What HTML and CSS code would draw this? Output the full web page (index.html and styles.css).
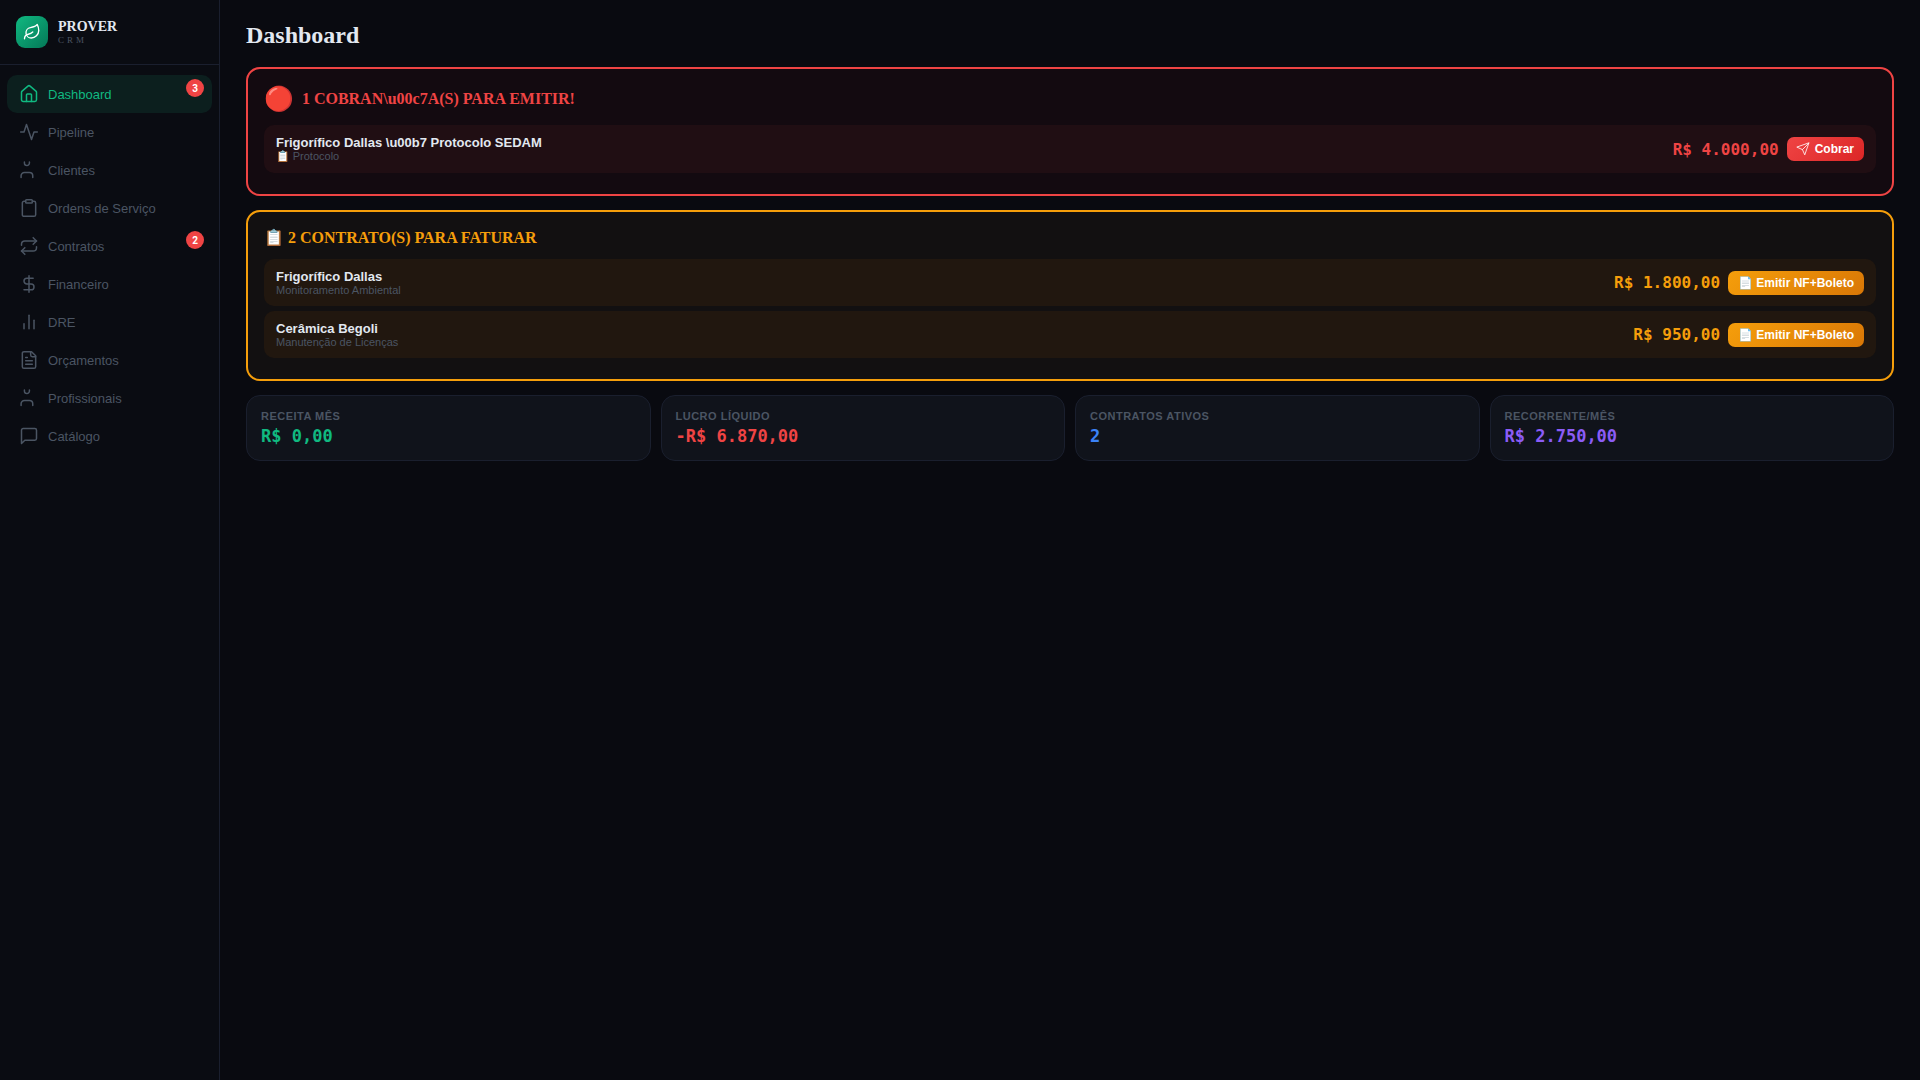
FILE: index.html
```html
<!DOCTYPE html>
<html lang="pt-BR">
<head>
<meta charset="utf-8">
<title>Prover CRM</title>
<link rel="stylesheet" href="styles.css">
</head>
<body>
<div class="app">
  <aside class="sidebar">
    <div class="brand">
      <div class="logo">
        <svg viewBox="0 0 24 24" class="logo-icon"><path d="M11 20A7 7 0 0 1 9.8 6.1C15.5 5 17 4.48 19 2c1 2 2 4.18 2 8 0 5.5-4.78 10-10 10Z"/><path d="M2 21c0-3 1.85-5.36 5.08-6C9.5 14.52 12 13 13 12"/></svg>
      </div>
      <div class="brand-text">
        <div class="brand-name">PROVER</div>
        <div class="brand-sub">CRM</div>
      </div>
    </div>
    <nav class="nav">
      <a class="nav-item active"><svg class="nav-icon" viewBox="0 0 24 24"><path d="M15 21v-8a1 1 0 0 0-1-1h-4a1 1 0 0 0-1 1v8"/><path d="M3 10a2 2 0 0 1 .71-1.53l7-6a2 2 0 0 1 2.58 0l7 6A2 2 0 0 1 21 10v9a2 2 0 0 1-2 2H5a2 2 0 0 1-2-2z"/></svg><span>Dashboard</span><b class="badge">3</b></a>
      <a class="nav-item"><svg class="nav-icon" viewBox="0 0 24 24"><path d="M22 12h-4l-3 9L9 3l-3 9H2"/></svg><span>Pipeline</span></a>
      <a class="nav-item"><svg class="nav-icon" viewBox="0 0 24 24"><path d="M2.5 21v-2a4 4 0 0 1 4-4h6a4 4 0 0 1 4 4v2"/><path d="M6.5 2.5v1a3 3 0 0 0 6 0v-1"/></svg><span>Clientes</span></a>
      <a class="nav-item"><svg class="nav-icon" viewBox="0 0 24 24"><rect x="8" y="2" width="8" height="4" rx="1"/><path d="M16 4h2a2 2 0 0 1 2 2v14a2 2 0 0 1-2 2H6a2 2 0 0 1-2-2V6a2 2 0 0 1 2-2h2"/></svg><span>Ordens de Serviço</span></a>
      <a class="nav-item"><svg class="nav-icon" viewBox="0 0 24 24"><path d="m17 2 4 4-4 4"/><path d="M3 11v-1a4 4 0 0 1 4-4h14"/><path d="m7 22-4-4 4-4"/><path d="M21 13v1a4 4 0 0 1-4 4H3"/></svg><span>Contratos</span><b class="badge">2</b></a>
      <a class="nav-item"><svg class="nav-icon" viewBox="0 0 24 24"><line x1="12" y1="2" x2="12" y2="22"/><path d="M17 5H9.5a3.5 3.5 0 0 0 0 7h5a3.5 3.5 0 0 1 0 7H6"/></svg><span>Financeiro</span></a>
      <a class="nav-item"><svg class="nav-icon" viewBox="0 0 24 24"><line x1="18" y1="20" x2="18" y2="10"/><line x1="12" y1="20" x2="12" y2="4"/><line x1="6" y1="20" x2="6" y2="14"/></svg><span>DRE</span></a>
      <a class="nav-item"><svg class="nav-icon" viewBox="0 0 24 24"><path d="M15 2H6a2 2 0 0 0-2 2v16a2 2 0 0 0 2 2h12a2 2 0 0 0 2-2V7Z"/><path d="M14 2v4a2 2 0 0 0 2 2h4"/><path d="M16 13H8"/><path d="M16 17H8"/><path d="M10 9H8"/></svg><span>Orçamentos</span></a>
      <a class="nav-item"><svg class="nav-icon" viewBox="0 0 24 24"><path d="M2.5 21v-2a4 4 0 0 1 4-4h6a4 4 0 0 1 4 4v2"/><path d="M6.5 2.5v1a3 3 0 0 0 6 0v-1"/></svg><span>Profissionais</span></a>
      <a class="nav-item"><svg class="nav-icon" viewBox="0 0 24 24"><path d="M21 15a2 2 0 0 1-2 2H7l-4 4V5a2 2 0 0 1 2-2h14a2 2 0 0 1 2 2z"/></svg><span>Catálogo</span></a>
    </nav>
  </aside>
  <main class="main">
    <h1 class="page-title">Dashboard</h1>
    <section class="alert alert-red">
      <h2 class="alert-title"><span class="pulse">🔴</span>1 COBRAN\u00c7A(S) PARA EMITIR!</h2>
      <div class="row row-red">
        <div class="row-info"><div class="row-name">Frigorífico Dallas \u00b7 Protocolo SEDAM</div><div class="row-sub">📋 Protocolo</div></div>
        <div class="row-actions"><span class="amount">R$ 4.000,00</span><button class="btn btn-red"><svg class="btn-icon" viewBox="0 0 24 24"><path d="M22 2 11 13"/><path d="M22 2 15 22l-4-9-9-4Z"/></svg>Cobrar</button></div>
      </div>
    </section>
    <section class="alert alert-orange">
      <h2 class="alert-title">📋 2 CONTRATO(S) PARA FATURAR</h2>
      <div class="row row-orange">
        <div class="row-info"><div class="row-name">Frigorífico Dallas</div><div class="row-sub">Monitoramento Ambiental</div></div>
        <div class="row-actions"><span class="amount">R$ 1.800,00</span><button class="btn btn-orange">📄 Emitir NF+Boleto</button></div>
      </div>
      <div class="row row-orange">
        <div class="row-info"><div class="row-name">Cerâmica Begoli</div><div class="row-sub">Manutenção de Licenças</div></div>
        <div class="row-actions"><span class="amount">R$ 950,00</span><button class="btn btn-orange">📄 Emitir NF+Boleto</button></div>
      </div>
    </section>
    <section class="stats">
      <div class="stat"><div class="stat-label">Receita Mês</div><div class="stat-value green">R$ 0,00</div></div>
      <div class="stat"><div class="stat-label">Lucro Líquido</div><div class="stat-value red">-R$ 6.870,00</div></div>
      <div class="stat"><div class="stat-label">Contratos Ativos</div><div class="stat-value blue">2</div></div>
      <div class="stat"><div class="stat-label">Recorrente/Mês</div><div class="stat-value purple">R$ 2.750,00</div></div>
    </section>
  </main>
</div>
</body>
</html>
```
FILE: styles.css
```css
* { box-sizing: border-box; }
html, body { margin: 0; height: 100%; }
body { background: #090a10; color: #e2e8f0; font-family: "Liberation Sans", Arial, "Noto Color Emoji", sans-serif; }
.app { display: flex; height: 100vh; overflow: hidden; }

.sidebar { width: 220px; flex: none; background: #0a0c12; border-right: 1px solid #1a1f2e; }
.brand { height: 65px; display: flex; align-items: center; gap: 10px; padding: 0 16px; border-bottom: 1px solid #1a1f2e; }
.logo { width: 32px; height: 32px; border-radius: 9px; background: linear-gradient(135deg, #10b981, #047857); display: flex; align-items: center; justify-content: center; }
.logo-icon { width: 18px; height: 18px; fill: none; stroke: #fff; stroke-width: 1.8; stroke-linecap: round; stroke-linejoin: round; }
.brand-text { margin-bottom: 1px; }
.brand-name { font-family: "Liberation Serif", serif; font-weight: 700; font-size: 14px; line-height: 16px; color: #e2e8f0; }
.brand-sub { font-family: "Liberation Serif", serif; font-size: 9px; line-height: 10px; letter-spacing: 3px; color: #4b5563; }

.nav { display: flex; flex-direction: column; padding: 10px 7px; }
.nav-item { position: relative; height: 38px; display: flex; align-items: center; gap: 9px; padding: 0 12px; border-radius: 10px; font-size: 13px; color: #4b5563; }
.nav-item.active { background: #0c1f1e; color: #10b981; }
.nav-icon { width: 20px; height: 20px; flex: none; fill: none; stroke: currentColor; stroke-width: 1.8; stroke-linecap: round; stroke-linejoin: round; }
.badge { position: absolute; top: 4px; right: 8px; width: 18px; height: 18px; border-radius: 50%; background: #ef4444; color: #fff; font-family: Roboto, sans-serif; font-size: 10px; font-weight: 700; display: flex; align-items: center; justify-content: center; }

.main { flex: 1; min-width: 0; padding: 19px 26px; }
.page-title { margin: 0 0 16px; font-family: "Liberation Serif", serif; font-size: 24px; line-height: 32px; font-weight: 700; color: #e2e8f0; }

.alert { border-radius: 14px; padding: 16px; margin-bottom: 14px; border: 2px solid; }
.alert-red { border-color: #ef4444; background: #130a10; }
.alert-orange { border-color: #f59e0b; background: #121011; }
.alert-title { margin: 0 0 11px; display: flex; align-items: center; font-family: "Liberation Serif", "Noto Color Emoji", serif; font-size: 16px; font-weight: 700; line-height: 20px; }
.alert-red .alert-title { color: #ef4444; line-height: 28px; margin-bottom: 12px; }
.alert-orange .alert-title { color: #f59e0b; }
.pulse { font-size: 24px; margin-right: 8px; }

.row { display: flex; align-items: center; justify-content: space-between; height: 47px; padding: 0 12px; border-radius: 10px; margin-bottom: 5px; }
.row-red { background: #200e13; height: 48px; }
.row-orange { background: #21170f; }
.row-name { font-size: 13px; line-height: 15px; font-weight: 700; color: #e2e8f0; }
.row-sub { font-size: 11px; line-height: 13px; color: #4b5563; }
.row-actions { display: flex; align-items: center; gap: 8px; }
.amount { font-family: "DejaVu Sans Mono", monospace; font-size: 16px; font-weight: 700; }
.row-red .amount { color: #ef4444; }
.row-orange .amount { color: #f59e0b; }
.btn { display: flex; align-items: center; gap: 5px; height: 24px; padding: 0 10px; border: 0; border-radius: 7px; color: #fff; font-family: inherit; font-size: 12px; font-weight: 700; }
.btn-red { background: linear-gradient(135deg, #ef4444, #dc2626); }
.btn-orange { background: linear-gradient(135deg, #f59e0b, #d97706); }
.btn-icon { width: 14px; height: 14px; margin-left: -1px; fill: none; stroke: #fff; stroke-width: 1.4; stroke-linecap: round; stroke-linejoin: round; }

.stats { display: grid; grid-template-columns: repeat(4, 1fr); gap: 10px; }
.stat { height: 66px; background: #10131b; border: 1px solid #1a1f2e; border-radius: 14px; padding: 13px 14px; }
.stat-label { font-size: 11px; line-height: 14px; font-weight: 700; text-transform: uppercase; letter-spacing: 0.5px; color: #4b5563; }
.stat-value { font-family: "DejaVu Sans Mono", monospace; font-size: 17px; line-height: 26px; font-weight: 700; }
.green { color: #10b981; }
.red { color: #ef4444; }
.blue { color: #3b82f6; }
.purple { color: #8b5cf6; }
```
